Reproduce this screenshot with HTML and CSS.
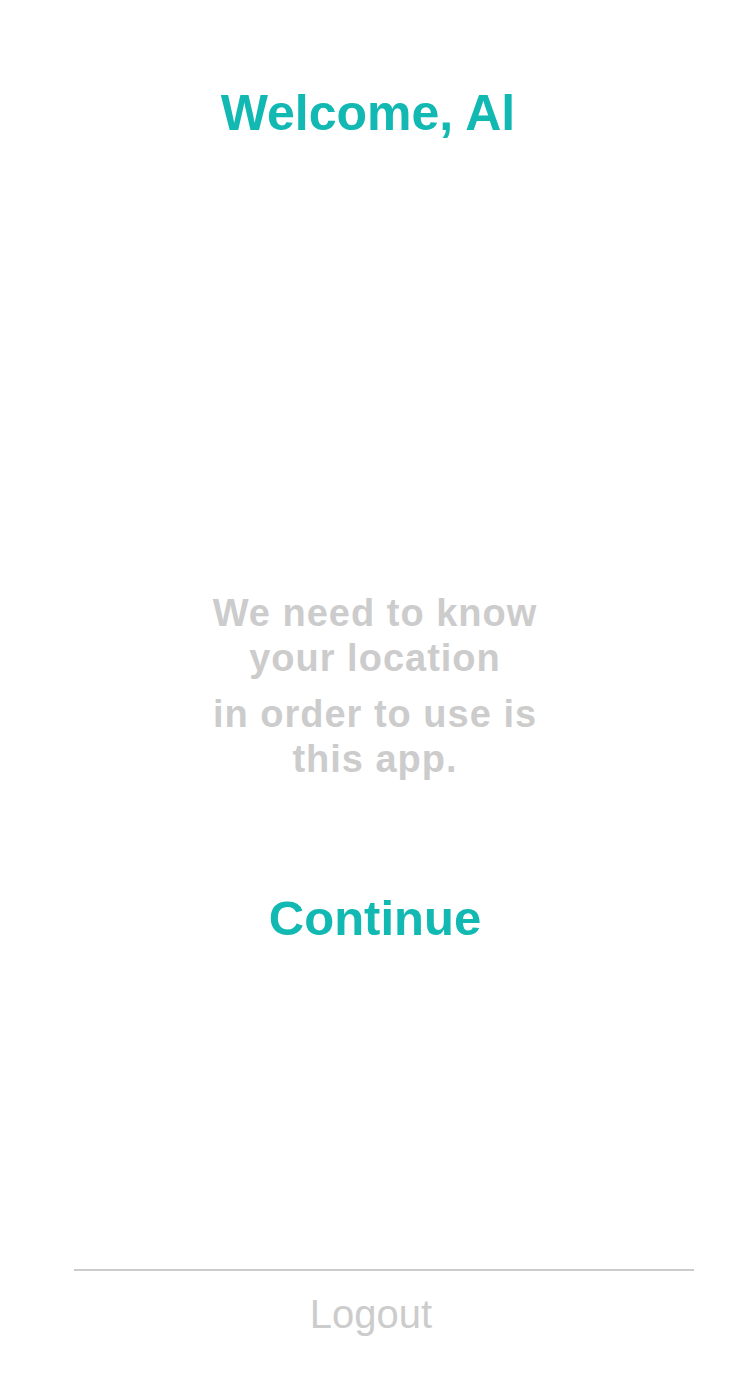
FILE: index.html
```html
<!DOCTYPE html>
<html>
<head>
<meta charset="utf-8">
<link rel="stylesheet" href="styles.css">
</head>
<body>
<div class="screen">
  <header class="top">
    <h1 class="title">Welcome, Al</h1>
  </header>
  <main class="middle">
    <p class="msg">We need to know<br>your location</p>
    <p class="msg msg2">in order to use is<br>this app.</p>
    <button class="continue">Continue</button>
  </main>
  <footer class="bottom">
    <div class="divider"></div>
    <button class="logout">Logout</button>
  </footer>
</div>
</body>
</html>
```
FILE: styles.css
```css
html, body {
  margin: 0;
  padding: 0;
  background: #ffffff;
}
.screen {
  width: 750px;
  height: 1400px;
  display: flex;
  flex-direction: column;
  font-family: "Liberation Sans", Arial, sans-serif;
}
.top {
  padding-top: 84px;
  display: flex;
  justify-content: center;
  padding-right: 14px;
}
.title {
  margin: 0;
  font-size: 50px;
  line-height: 58px;
  font-weight: bold;
  color: #12b9b3;
}
.middle {
  display: flex;
  flex-direction: column;
  align-items: center;
  padding-top: 449px;
}
.msg {
  margin: 0;
  font-size: 38px;
  line-height: 45px;
  font-weight: bold;
  color: #cccccc;
  text-align: center;
  letter-spacing: 1px;
}
.msg2 {
  margin-top: 11px;
}
.continue {
  margin-top: 108px;
  padding: 0;
  border: 0;
  background: none;
  font-family: inherit;
  font-size: 49px;
  line-height: 56px;
  font-weight: bold;
  color: #12b9b3;
}
.bottom {
  margin-top: auto;
  padding-bottom: 64px;
  display: flex;
  flex-direction: column;
  align-items: center;
}
.divider {
  align-self: stretch;
  margin: 0 56px 0 74px;
  height: 2px;
  background: #cccccc;
}
.logout {
  margin-top: 21px;
  margin-right: 8px;
  padding: 0;
  border: 0;
  background: none;
  font-family: inherit;
  font-size: 40px;
  line-height: 44px;
  font-weight: normal;
  color: #cccccc;
}
```
